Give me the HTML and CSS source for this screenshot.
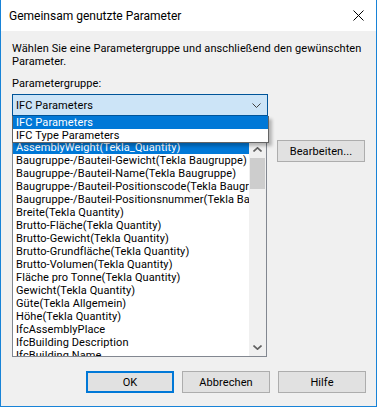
FILE: index.html
```html
<!DOCTYPE html>
<html lang="de">
<head>
    <meta charset="UTF-8">
    <title>Gemeinsam genutzte Parameter</title>
    <link rel="stylesheet" href="styles.css">
</head>
<body>

<div class="window">
    <div class="titlebar">
        <span class="title">Gemeinsam genutzte Parameter</span>
        <svg class="close" width="11" height="11" viewBox="0 0 11 11">
            <path d="M0.5 0.5 L10.5 10.5 M10.5 0.5 L0.5 10.5" stroke="#000" stroke-width="1" fill="none"/>
        </svg>
    </div>

    <div class="content">
        <p class="desc">Wählen Sie eine Parametergruppe und anschließend den gewünschten Parameter.</p>

        <div class="label">Parametergruppe:</div>
        <div class="combo">
            <span>IFC Parameters</span>
            <svg width="9" height="5" viewBox="0 0 9 5">
                <path d="M0.5 0.5 L4.5 4.5 L8.5 0.5" stroke="#404040" stroke-width="1" fill="none"/>
            </svg>
        </div>

        <div class="dropdown">
            <div class="opt selected">IFC Parameters</div>
            <div class="opt">IFC Type Parameters</div>
        </div>

        <div class="row">
            <div class="listbox">
                <div class="items">
                    <div class="item selected">AssemblyWeight(Tekla_Quantity)</div>
                    <div class="item">Baugruppe-/Bauteil-Gewicht(Tekla Baugruppe)</div>
                    <div class="item">Baugruppe-/Bauteil-Name(Tekla Baugruppe)</div>
                    <div class="item">Baugruppe-/Bauteil-Positionscode(Tekla Baugruppe)</div>
                    <div class="item">Baugruppe-/Bauteil-Positionsnummer(Tekla Baugruppe)</div>
                    <div class="item">Breite(Tekla Quantity)</div>
                    <div class="item">Brutto-Fläche(Tekla Quantity)</div>
                    <div class="item">Brutto-Gewicht(Tekla Quantity)</div>
                    <div class="item">Brutto-Grundfläche(Tekla Quantity)</div>
                    <div class="item">Brutto-Volumen(Tekla Quantity)</div>
                    <div class="item">Fläche pro Tonne(Tekla Quantity)</div>
                    <div class="item">Gewicht(Tekla Quantity)</div>
                    <div class="item">Güte(Tekla Allgemein)</div>
                    <div class="item">Höhe(Tekla Quantity)</div>
                    <div class="item">IfcAssemblyPlace</div>
                    <div class="item">IfcBuilding Description</div>
                    <div class="item">IfcBuilding Name</div>
                </div>
                <div class="scrollbar">
                    <div class="arrow">
                        <svg width="9" height="5" viewBox="0 0 9 5">
                            <path d="M0.5 4.5 L4.5 0.8 L8.5 4.5" stroke="#606060" stroke-width="1.6" fill="none"/>
                        </svg>
                    </div>
                    <div class="track">
                        <div class="thumb"></div>
                    </div>
                    <div class="arrow">
                        <svg width="9" height="5" viewBox="0 0 9 5">
                            <path d="M0.5 0.5 L4.5 4.2 L8.5 0.5" stroke="#606060" stroke-width="1.6" fill="none"/>
                        </svg>
                    </div>
                </div>
            </div>
            <button class="btn">Bearbeiten...</button>
        </div>

        <div class="buttons">
            <button class="btn default">OK</button>
            <button class="btn">Abbrechen</button>
            <button class="btn">Hilfe</button>
        </div>
    </div>
</div>

</body>
</html>
```

FILE: styles.css
```css
body {
    margin: 0;
    font-family: Roboto, "Noto Sans", sans-serif;
    font-size: 11px;
    letter-spacing: 0.1px;
    color: #000;
    background-color: #fff;
}
.window {
    position: relative;
    width: 375px;
    height: 406px;
    border: 1px solid #1883d7;
    border-top: none;
    background-color: #f0f0f0;
}
.titlebar {
    height: 31px;
    background-color: #fff;
    display: flex;
    align-items: center;
    justify-content: space-between;
    padding: 0 12px 0 8px;
}
.title {
    font-size: 12px;
    letter-spacing: 0;
}
.content {
    padding: 11px 10px 0 11px;
}
.desc {
    margin: 0;
    line-height: 13px;
    width: 362px;
}
.label {
    margin-top: 9px;
    line-height: 13px;
}
.combo {
    margin-top: 4px;
    width: 256px;
    height: 22px;
    box-sizing: border-box;
    border: 1px solid #005499;
    background-color: #cce4f7;
    display: flex;
    align-items: center;
    justify-content: space-between;
    padding: 0 6px 0 3px;
}
.dropdown {
    position: absolute;
    left: 11px;
    top: 116px;
    width: 255px;
    border: 1px solid #646464;
    border-top: none;
    background-color: #fff;
    box-shadow: 3px 3px 3px rgba(0, 0, 0, 0.25);
    z-index: 2;
}
.opt {
    height: 13px;
    line-height: 13px;
    padding-left: 3px;
}
.opt.selected {
    background-color: #0078d7;
    color: #fff;
}
.row {
    margin-top: 24px;
    display: flex;
    align-items: flex-start;
    gap: 10px;
}
.listbox {
    width: 255px;
    height: 217px;
    box-sizing: border-box;
    border: 1px solid #828790;
    background-color: #fff;
    display: flex;
    overflow: hidden;
}
.items {
    flex: 1;
    overflow: hidden;
}
.item {
    height: 13px;
    line-height: 13px;
    padding-left: 3px;
    white-space: nowrap;
    overflow: hidden;
}
.item.selected {
    background-color: #0078d7;
    color: #fff;
}
.scrollbar {
    width: 17px;
    background-color: #f0f0f0;
    display: flex;
    flex-direction: column;
}
.arrow {
    height: 17px;
    display: flex;
    align-items: center;
    justify-content: center;
}
.track {
    flex: 1;
}
.thumb {
    margin: 0 1px;
    height: 31px;
    background-color: #cdcdcd;
}
.btn {
    width: 88px;
    height: 22px;
    box-sizing: border-box;
    border: 1px solid #adadad;
    background-color: #e1e1e1;
    font-family: Roboto, "Noto Sans", sans-serif;
    font-size: 11px;
    letter-spacing: 0.1px;
    color: #000;
    padding: 0;
}
.buttons {
    margin-top: 14px;
    display: flex;
    justify-content: flex-end;
    gap: 8px;
}
.btn.default {
    border: 2px solid #0078d7;
}
```
